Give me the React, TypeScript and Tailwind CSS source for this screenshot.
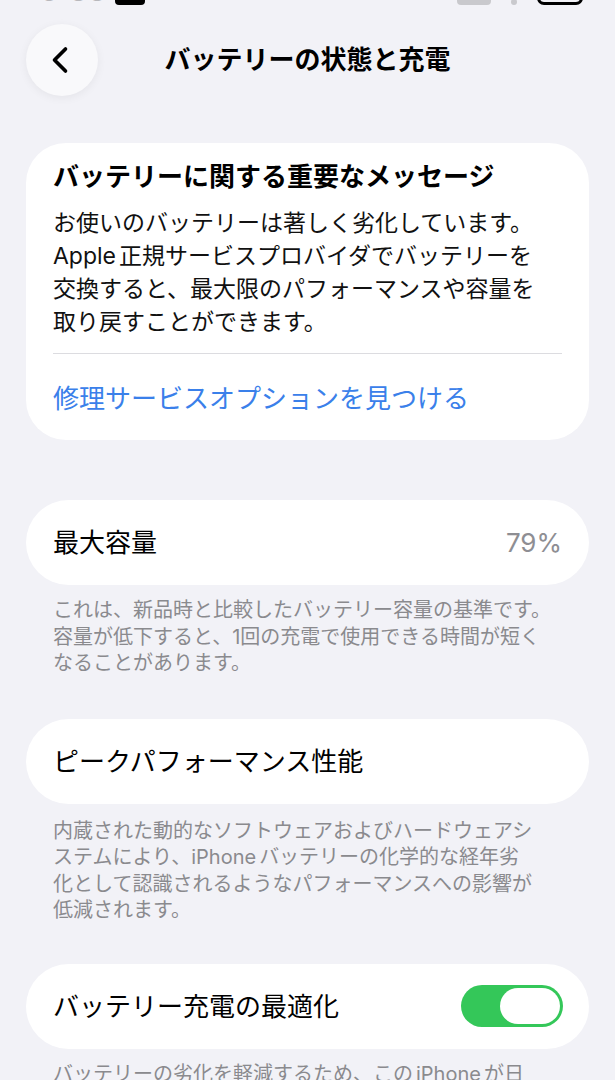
import { ChevronLeft } from 'lucide-react';

const Toggle = () => (
  <div className="w-[102px] h-[42px] rounded-full bg-[#34c759] flex items-center justify-end p-[3px]">
    <div className="w-[60px] h-[36px] rounded-full bg-white" />
  </div>
);

const App = () => {
  return (
    <div className="min-h-screen bg-[#f2f2f7] font-[Inter,'Noto_Sans_CJK_JP',sans-serif] text-black overflow-hidden">
      {/* Status bar (cut off at top) */}
      <div className="h-[5px] overflow-hidden">
        <div className="-mt-[30px] h-[35px] flex items-end justify-between px-[40px]">
          <div className="flex items-end gap-[8px]">
            <span className="text-[30px] leading-none font-semibold text-[#b8b8bc]">9:55</span>
            <div className="w-[30px] h-[20px] bg-black rounded-sm" />
          </div>
          <div className="flex items-end gap-[20px]">
            <div className="w-[34px] h-[14px] bg-[#c9c9cd] rounded-sm" />
            <div className="w-[6px] h-[6px] bg-[#c9c9cd] rounded-full" />
            <div className="w-[46px] h-[22px] border-[3px] border-black rounded-[7px] mr-[-8px]" />
          </div>
        </div>
      </div>

      {/* Header */}
      <header className="mt-[19px] px-[26px] grid grid-cols-[72px_1fr_72px] items-center">
        <button className="w-[72px] h-[72px] rounded-full bg-[#f9f9fb] shadow-[0_2px_10px_rgba(0,0,0,0.06)] flex items-center justify-center">
          <ChevronLeft className="w-[44px] h-[44px] text-black -ml-[4px]" strokeWidth={2} />
        </button>
        <h1 className="text-center text-[26px] font-semibold leading-[34px]">バッテリーの状態と充電</h1>
        <div />
      </header>

      <main className="px-[26px]">
        {/* Important message */}
        <section className="mt-[47px] bg-white rounded-[40px] px-[27px] pt-[17px] pb-[24px]">
          <h2 className="text-[26px] font-bold leading-[34px]">バッテリーに関する重要なメッセージ</h2>
          <p className="mt-[13px] text-[23px] leading-[33px] text-[#111]">
            お使いのバッテリーは著しく劣化しています。<br />
            Apple<span className="inline-block w-[3px]" />正規サービスプロバイダでバッテリーを<br />
            交換すると、最大限のパフォーマンスや容量を<br />
            取り戻すことができます。
          </p>
          <div className="mt-[14px] h-px bg-[#dcdce0]" />
          <a className="block mt-[28px] text-[26px] leading-[34px] text-[#3a80ea]">修理サービスオプションを見つける</a>
        </section>

        {/* Maximum capacity */}
        <section className="mt-[60px] h-[85px] bg-white rounded-full px-[27px] flex items-center justify-between">
          <span className="text-[26px]">最大容量</span>
          <span className="text-[26px] text-[#8e8e93]">79%</span>
        </section>
        <p className="mt-[12px] px-[27px] text-[20px] leading-[26.5px] text-[#8a8a8e]">
          これは、新品時と比較したバッテリー容量の基準です。<br />
          容量が低下すると、1回の充電で使用できる時間が短く<br />
          なることがあります。
        </p>

        {/* Peak performance */}
        <section className="mt-[42px] h-[85px] bg-white rounded-full px-[27px] flex items-center">
          <span className="text-[26px]">ピークパフォーマンス性能</span>
        </section>
        <p className="mt-[14px] px-[27px] text-[20px] leading-[26.5px] text-[#8a8a8e]">
          内蔵された動的なソフトウェアおよびハードウェアシ<br />
          ステムにより、iPhone<span className="inline-block w-[3px]" />バッテリーの化学的な経年劣<br />
          化として認識されるようなパフォーマンスへの影響が<br />
          低減されます。
        </p>

        {/* Optimized charging */}
        <section className="mt-[40px] h-[85px] bg-white rounded-full pl-[27px] pr-[26px] flex items-center justify-between">
          <span className="text-[26px]">バッテリー充電の最適化</span>
          <Toggle />
        </section>
        <p className="mt-[12px] px-[27px] text-[20px] leading-[26.5px] text-[#8a8a8e]">
          バッテリーの劣化を軽減するため、この<span className="inline-block w-[3px]" />iPhone<span className="inline-block w-[3px]" />が日
        </p>
      </main>
    </div>
  );
};

export default App;
